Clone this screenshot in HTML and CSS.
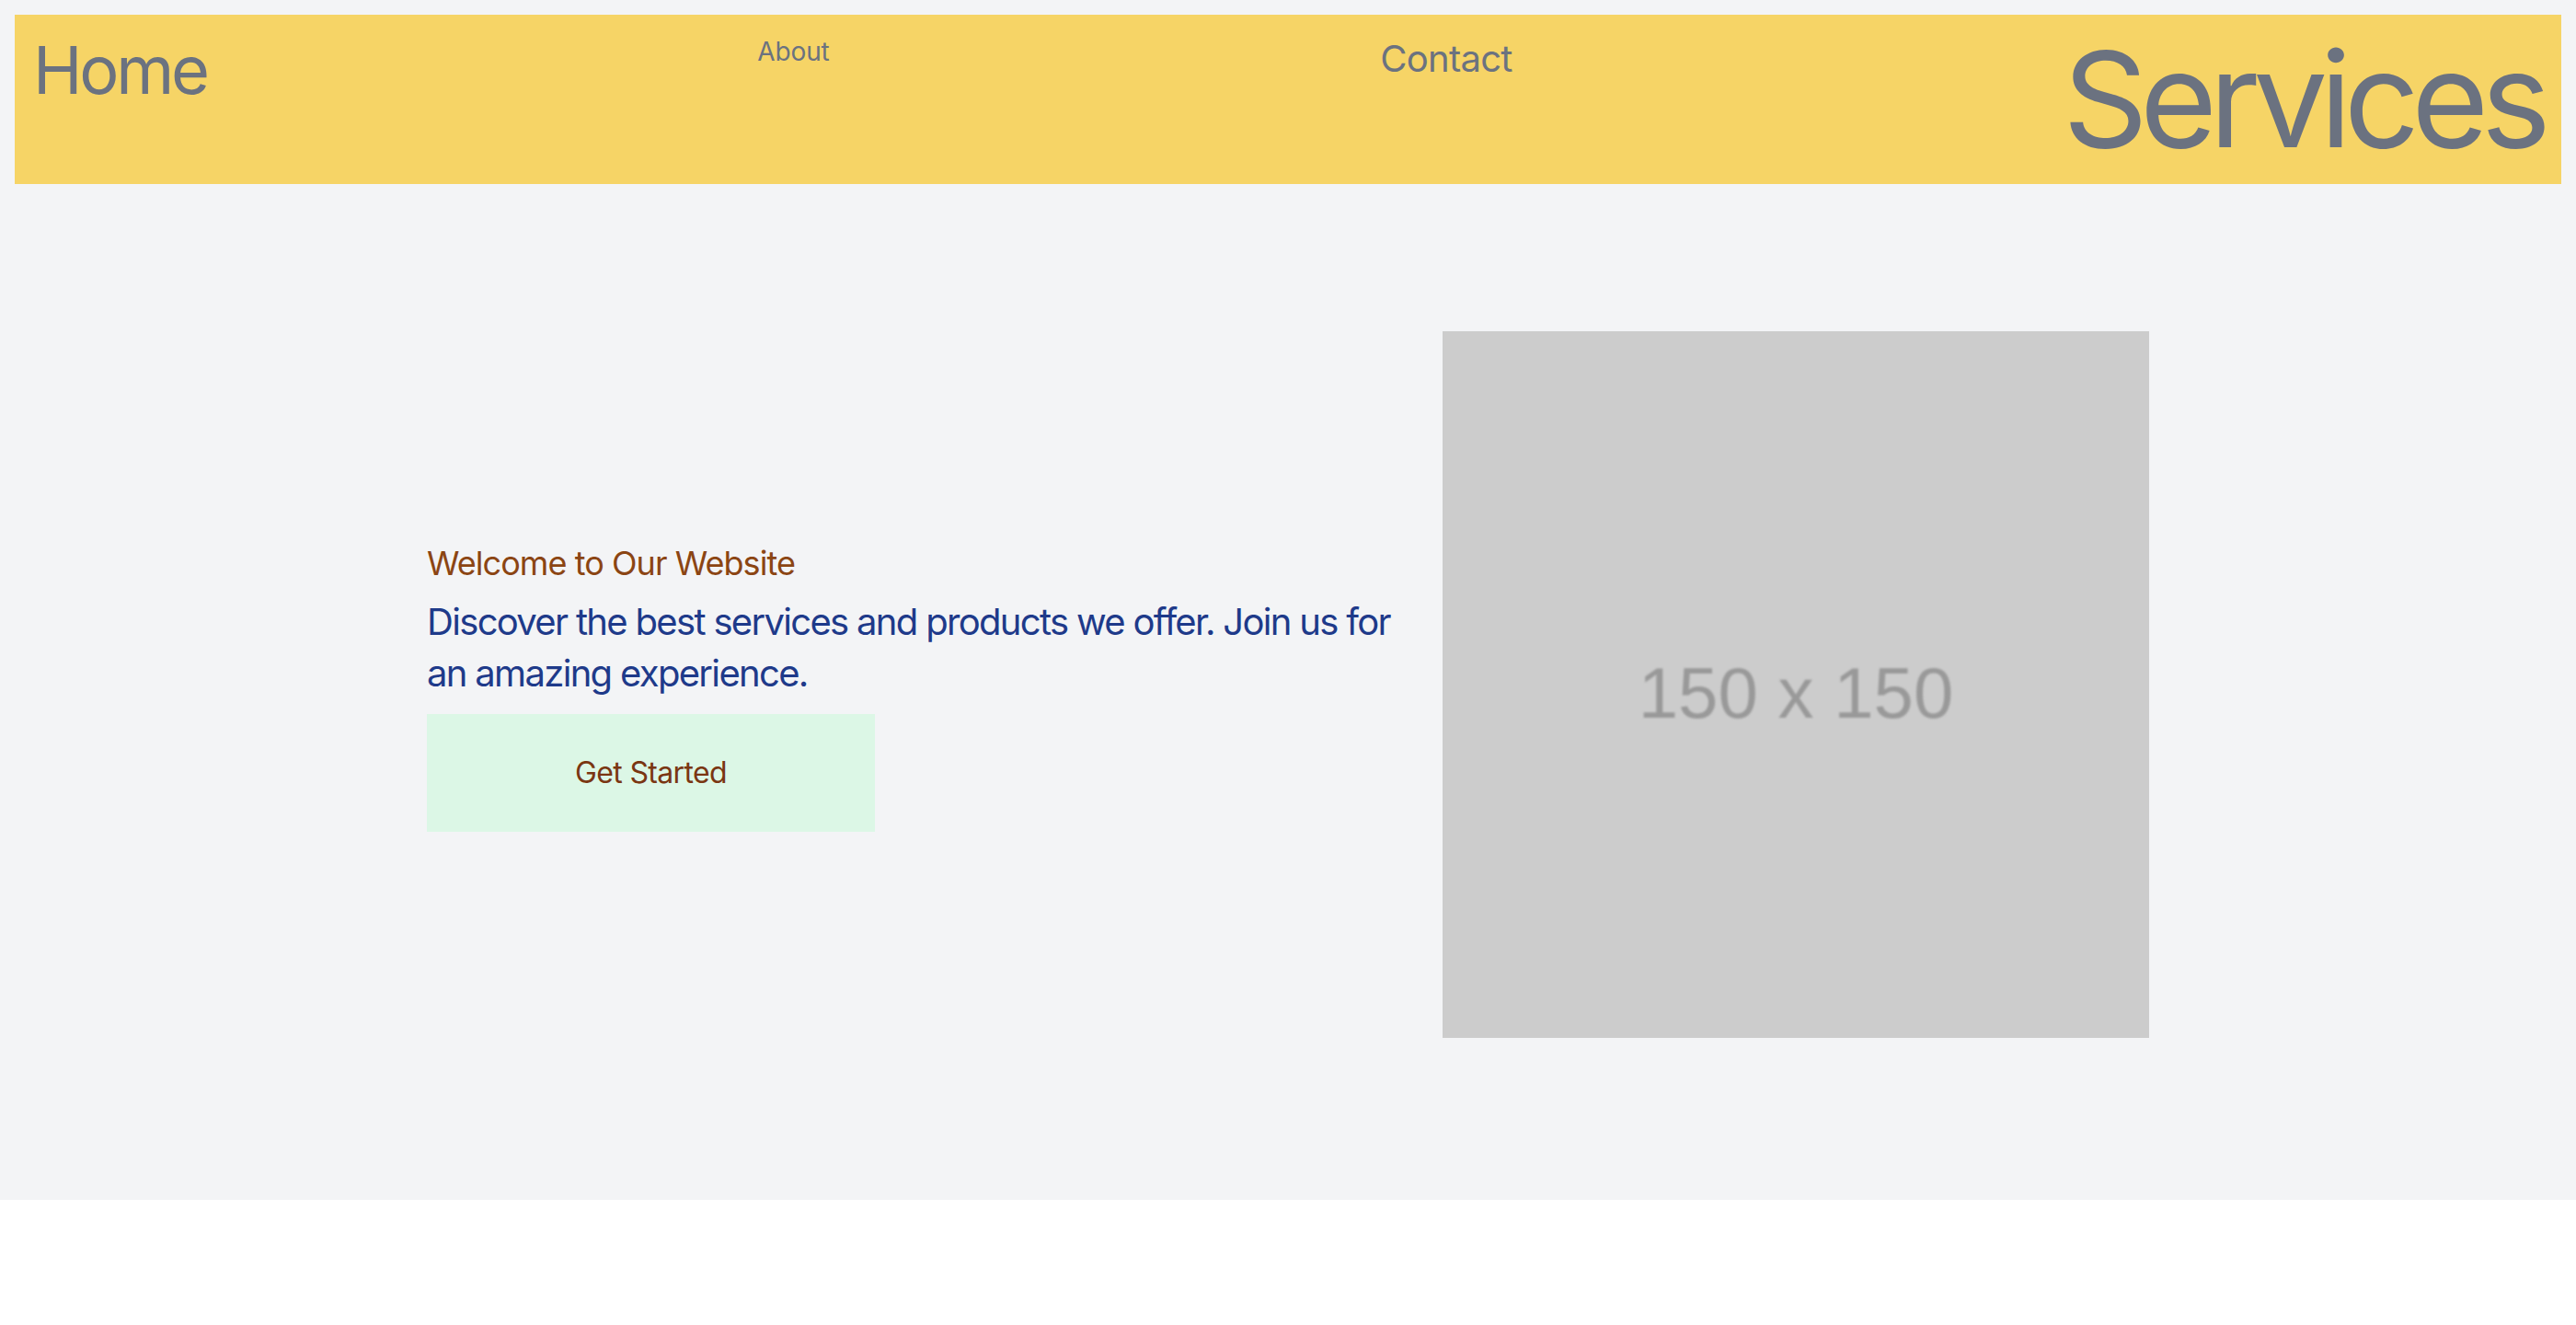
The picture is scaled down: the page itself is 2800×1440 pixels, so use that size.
FILE: index.html
```html
<!DOCTYPE html>
<html lang="en">
<head>
<meta charset="utf-8">
<title>Welcome</title>
<link rel="stylesheet" href="styles.css">
</head>
<body>
<div class="page">
  <header class="nav">
    <a class="nav-link nav-home" href="#">Home</a>
    <a class="nav-link nav-about" href="#">About</a>
    <a class="nav-link nav-contact" href="#">Contact</a>
    <a class="nav-link nav-services" href="#">Services</a>
  </header>
  <section class="hero">
    <div class="hero-text">
      <h1 class="hero-title">Welcome to Our Website</h1>
      <p class="hero-lead">Discover the best services and products we offer. Join us for an amazing experience.</p>
      <button class="hero-btn" type="button">Get Started</button>
    </div>
    <div class="hero-image" role="img" aria-label="Placeholder image">
      <span class="hero-image-label">150 x 150</span>
    </div>
  </section>
</div>
</body>
</html>
```

FILE: styles.css
```css
* {
  box-sizing: border-box;
}

html, body {
  margin: 0;
  padding: 0;
  background: #ffffff;
}

body {
  font-family: Inter, "Noto Sans", "Liberation Sans", sans-serif;
}

.page {
  background: #f3f4f6;
  padding: 16px;
}

.nav {
  display: flex;
  justify-content: space-between;
  align-items: flex-start;
  background: #f6d466;
  padding: 20px;
}

.nav-link {
  color: #6b7280;
  text-decoration: none;
  display: block;
}

.nav-home {
  font-size: 72px;
  line-height: 80px;
  letter-spacing: -0.045em;
}

.nav-about {
  font-size: 28px;
  line-height: 40px;
  letter-spacing: -0.005em;
}

.nav-contact {
  font-size: 40px;
  line-height: 56px;
  letter-spacing: -0.018em;
}

.nav-services {
  font-size: 144px;
  line-height: 144px;
  letter-spacing: -0.06em;
}

.hero {
  display: flex;
  justify-content: center;
  align-items: center;
  gap: 48px;
  padding: 160px 0;
}

.hero-text {
  width: 1056px;
  display: flex;
  flex-direction: column;
  align-items: flex-start;
}

.hero-title {
  margin: 0 0 8px;
  font-size: 36px;
  line-height: 56px;
  font-weight: 400;
  letter-spacing: -0.026em;
  color: #8b4513;
}

.hero-lead {
  margin: 0 0 16px;
  font-size: 40px;
  line-height: 56px;
  letter-spacing: -0.042em;
  color: #1e3a8a;
}

.hero-btn {
  width: 487px;
  padding: 40px 0;
  border: 0;
  background: #dcf7e6;
  color: #7a3612;
  font-family: inherit;
  font-size: 32px;
  line-height: 48px;
  letter-spacing: -0.02em;
  cursor: pointer;
}

.hero-image {
  width: 768px;
  height: 768px;
  flex: none;
  background: #cccccc;
  display: flex;
  justify-content: center;
  align-items: center;
}

.hero-image-label {
  margin-top: 18px;
  font-family: "Liberation Sans", Arial, sans-serif;
  font-size: 78px;
  color: #999999;
  filter: blur(1.2px);
}
```
